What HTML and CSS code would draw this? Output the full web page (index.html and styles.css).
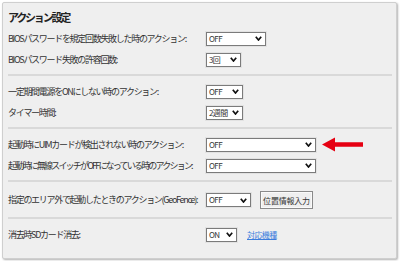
FILE: index.html
```html
<!DOCTYPE html>
<html lang="ja">
<head>
    <meta charset="UTF-8">
    <title>アクション設定</title>
    <link rel="stylesheet" href="styles.css">
</head>
<body>

    <div class="panel">
        <h2 class="title">アクション設定</h2>

        <div class="row">
            <span class="label">BIOSパスワードを規定回数失敗した時のアクション:</span>
            <div class="select w60"><span>OFF</span><svg class="chev" viewBox="0 0 7 5"><path d="M0.8 0.8 L3.5 4 L6.2 0.8"/></svg></div>
        </div>
        <div class="row">
            <span class="label">BIOSパスワード失敗の許容回数:</span>
            <div class="select w35"><span>3回</span><svg class="chev" viewBox="0 0 7 5"><path d="M0.8 0.8 L3.5 4 L6.2 0.8"/></svg></div>
        </div>

        <hr class="sep">

        <div class="row">
            <span class="label">一定期間電源をONにしない時のアクション:</span>
            <div class="select w37"><span>OFF</span><svg class="chev" viewBox="0 0 7 5"><path d="M0.8 0.8 L3.5 4 L6.2 0.8"/></svg></div>
        </div>
        <div class="row">
            <span class="label">タイマー時間:</span>
            <div class="select w37"><span>2週間</span><svg class="chev" viewBox="0 0 7 5"><path d="M0.8 0.8 L3.5 4 L6.2 0.8"/></svg></div>
        </div>

        <hr class="sep">

        <div class="row">
            <span class="label">起動時にUIMカードが検出されない時のアクション:</span>
            <div class="select w110"><span>OFF</span><svg class="chev" viewBox="0 0 7 5"><path d="M0.8 0.8 L3.5 4 L6.2 0.8"/></svg></div>
            <!-- 注目ポイントの矢印 -->
            <svg class="arrow" viewBox="0 0 41 15"><polygon points="0,7.5 13,0.5 13,5.3 41,5.3 41,9.7 13,9.7 13,14.5"/></svg>
        </div>
        <div class="row">
            <span class="label narrow">起動時に無線スイッチがOFFになっている時のアクション:</span>
            <div class="select w110"><span>OFF</span><svg class="chev" viewBox="0 0 7 5"><path d="M0.8 0.8 L3.5 4 L6.2 0.8"/></svg></div>
        </div>

        <hr class="sep">

        <div class="row tall">
            <span class="label">指定のエリア外で起動したときのアクション(GeoFence):</span>
            <div class="select w45"><span>OFF</span><svg class="chev" viewBox="0 0 7 5"><path d="M0.8 0.8 L3.5 4 L6.2 0.8"/></svg></div>
            <button class="btn">位置情報入力</button>
        </div>

        <hr class="sep">

        <div class="row">
            <span class="label">消去時SDカード消去:</span>
            <div class="select w31"><span>ON</span><svg class="chev" viewBox="0 0 7 5"><path d="M0.8 0.8 L3.5 4 L6.2 0.8"/></svg></div>
            <a class="link" href="#">対応機種</a>
        </div>
    </div>

</body>
</html>
```

FILE: styles.css
```css
body {
    margin: 0;
    background-color: #ffffff;
    font-family: "Noto Sans CJK JP", "Noto Sans", sans-serif;
    color: #333;
}
.panel {
    box-sizing: border-box;
    width: 395px;
    height: 257px;
    margin: 2px;
    padding: 7px 4px 0 5px;
    background-color: #efefef;
    border: 1px solid #cfcfcf;
    border-radius: 2px;
    box-shadow: 1px 1px 2px rgba(0, 0, 0, 0.3);
}
.title {
    margin: 0 0 4px 0;
    height: 14px;
    line-height: 14px;
    font-size: 11px;
    font-weight: bold;
    letter-spacing: -2.2px;
    color: #222;
}
.row {
    display: flex;
    align-items: center;
    height: 21px;
}
.row.tall {
    height: 26px;
}
.label {
    flex: none;
    width: 198px;
    white-space: nowrap;
    font-size: 9px;
    letter-spacing: -1.3px;
    line-height: 12px;
}
.label.narrow {
    letter-spacing: -1.8px;  /* 長い文言なので詰める */
}
.select {
    box-sizing: border-box;
    display: flex;
    justify-content: space-between;
    align-items: center;
    height: 14px;
    padding: 0 3px 0 2px;
    background-color: #fff;
    border: 1px solid #7b7b7b;
    box-shadow: 0 0 0 1px #e2e2e2;
    font-size: 8px;
    letter-spacing: -0.6px;
    line-height: 12px;
    color: #333;
}
.w31 { width: 31px; }
.w35 { width: 35px; }
.w37 { width: 37px; }
.w45 { width: 45px; }
.w60 { width: 60px; }
.w110 { width: 110px; }
.chev {
    width: 7px;
    height: 5px;
    flex: none;
}
.chev path {
    fill: none;
    stroke: #111;
    stroke-width: 1.7;
}
.arrow {
    width: 41px;
    height: 15px;
    margin-left: 6px;
    fill: #e60012;
}
.btn {
    box-sizing: border-box;
    width: 53px;
    height: 18px;
    margin-left: 9px;
    padding: 0;
    background-color: #efefef;
    border: 1px solid #8a8a8a;
    box-shadow: inset 0 0 0 1px #fafafa;
    font-family: inherit;
    font-size: 8px;
    letter-spacing: -0.2px;
    color: #333;
}
.link {
    margin-left: 10px;
    font-size: 8px;
    letter-spacing: -0.6px;
    color: #3b7ddd;
}
.sep {
    margin: 4px 0 5px 0;
    border: none;
    border-top: 2px solid #d9d9d9;
    height: 0;
}
```
